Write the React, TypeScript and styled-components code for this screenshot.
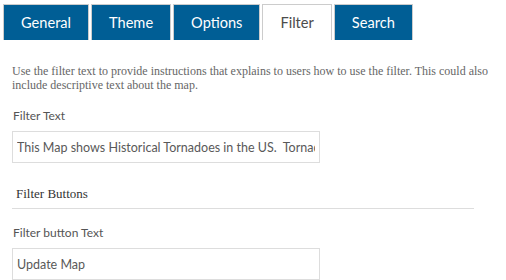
import React from "react"
import styled, { createGlobalStyle } from "styled-components"

const GlobalStyle = createGlobalStyle`
  body {
    margin: 0;
    background: #fff;
  }
`

const TABS = ["General", "Theme", "Options", "Filter", "Search"]
const ACTIVE = "Filter"

export default function App() {
  return (
    <Page>
      <GlobalStyle />
      <TabBar>
        {TABS.map((t) => (
          <Tab key={t} $active={t === ACTIVE}>
            {t}
          </Tab>
        ))}
      </TabBar>
      <Panel>
        <Description>
          Use the filter text to provide instructions that explains to users how to use the filter. This could also
          include descriptive text about the map.
        </Description>
        <Field>
          <Label>Filter Text</Label>
          <TextInput readOnly value="This Map shows Historical Tornadoes in the US.  Tornadoes are plotted by year and magnitude." />
        </Field>
        <SectionTitle>Filter Buttons</SectionTitle>
        <Field>
          <Label>Filter button Text</Label>
          <TextInput readOnly value="Update Map" />
        </Field>
      </Panel>
    </Page>
  )
}

const Page = styled.div`
  width: 506px;
  height: 280px;
  overflow: hidden;
`

const TabBar = styled.div`
  display: flex;
  gap: 2px;
  padding: 4px 0 0 3px;
`

const Tab = styled.div<{ $active: boolean }>`
  height: 35px;
  padding: 0 17px;
  display: flex;
  align-items: center;
  justify-content: center;
  border: 1px solid #ccc;
  border-bottom: none;
  background: ${(p) => (p.$active ? "#fff" : "#005e95")};
  color: ${(p) => (p.$active ? "#4c4c4c" : "#fff")};
  font-family: Lato, "Noto Sans", sans-serif;
  font-size: 14.6px;
`

const Panel = styled.div`
  padding: 0 12px;
`

const Description = styled.p`
  margin: 24px 0 0;
  width: 482px;
  font-family: "Liberation Serif", serif;
  font-size: 12px;
  line-height: 14px;
  color: #666;
`

const Field = styled.div`
  display: flex;
  flex-direction: column;
`

const Label = styled.div`
  margin: 16px 0 7px 1px;
  font-family: Lato, "Noto Sans", sans-serif;
  font-size: 12px;
  line-height: 16px;
  color: #555;
`

const TextInput = styled.input`
  box-sizing: border-box;
  width: 308px;
  height: 32px;
  padding: 0 4px;
  border: 1px solid #ddd;
  outline: none;
  font-family: Lato, "Noto Sans", sans-serif;
  font-size: 12.5px;
  color: #595959;
`

const SectionTitle = styled.div`
  margin-top: 23px;
  padding: 0 0 6px 4px;
  width: 458px;
  border-bottom: 1px solid #ddd;
  font-family: "Liberation Serif", serif;
  font-size: 13px;
  line-height: 16px;
  color: #333;
`
